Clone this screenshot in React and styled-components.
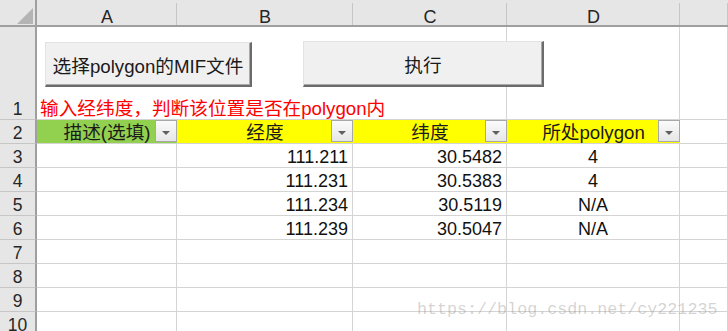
import React from 'react';
import styled, { createGlobalStyle } from 'styled-components';

const FONT = `"Liberation Sans", "Noto Sans CJK SC", sans-serif`;

const GlobalStyle = createGlobalStyle`
  html, body { margin: 0; padding: 0; background: #fff; }
  body { font-family: ${FONT}; }
  * { box-sizing: border-box; }
`;

const Sheet = styled.div`
  position: relative;
  width: 728px;
  height: 331px;
  overflow: hidden;
  background: #fff;
`;

const Grid = styled.div`
  display: grid;
  grid-template-columns: 37px 140px 176px 154px 173px 1fr;
  grid-template-rows: 27px 93px repeat(9, 24px);
`;

const Corner = styled.div`
  background: #e6e6e6;
  border-right: 2px solid #9f9f9f;
  border-bottom: 2px solid #9f9f9f;
  display: flex;
  align-items: flex-end;
  justify-content: flex-end;
  padding: 0 2px 1px 0;
`;

const ColHeader = styled.div`
  position: relative;
  background: #e6e6e6;
  border-bottom: 2px solid #9f9f9f;
  display: flex;
  align-items: flex-start;
  justify-content: center;
  padding-top: 8px;
  font-size: 18px;
  line-height: 18px;
  color: #262626;
  &::after {
    content: '';
    position: absolute;
    right: 0;
    top: 3px;
    bottom: 0;
    width: 1px;
    background: #c6c6c6;
  }
`;

const RowHeader = styled.div`
  background: #e6e6e6;
  border-right: 2px solid #9f9f9f;
  border-bottom: 1px solid #c6c6c6;
  display: flex;
  align-items: flex-end;
  justify-content: center;
  font-size: 17.5px;
  line-height: 20px;
  color: #262626;
`;

const justify = (a) =>
  a === 'right' ? 'flex-end' : a === 'center' ? 'center' : 'flex-start';

const Cell = styled.div`
  border-right: 1px solid #d4d4d4;
  border-bottom: 1px solid #d4d4d4;
  display: flex;
  align-items: flex-end;
  justify-content: ${(p) => justify(p.$align)};
  padding: 0 ${(p) => (p.$align === 'center' ? '3px' : '4px')} 0 3px;
  font-size: 18px;
  line-height: 20px;
  color: #111;
  white-space: nowrap;
  min-width: 0;
`;

const IntroCell = styled.div`
  grid-column: span 3;
  border-right: 1px solid #d4d4d4;
  border-bottom: 1px solid #d4d4d4;
  display: flex;
  flex-direction: column;
  justify-content: space-between;
  padding: 14px 0 0 3px;
  min-width: 0;
`;

const Toolbar = styled.div`
  display: flex;
  align-items: flex-end;
  gap: 51px;
  margin-left: 5px;
`;

const SheetButton = styled.button`
  flex: 0 0 auto;
  width: ${(p) => p.$w}px;
  height: ${(p) => p.$h}px;
  background: #f0f0f0;
  border-top: 1px solid #e3e3e3;
  border-left: 1px solid #e3e3e3;
  border-right: 2px solid #6b6b6b;
  border-bottom: 2px solid #6b6b6b;
  box-shadow: inset -1px -1px 0 #a9a9a9;
  font-family: ${FONT};
  font-size: 18.67px;
  color: #1a1a1a;
  padding: 0;
  white-space: nowrap;
`;

const Notice = styled.div`
  font-size: 18.67px;
  line-height: 20px;
  color: #ff0000;
  white-space: nowrap;
`;

const HeaderCell = styled.div`
  position: relative;
  background: ${(p) => p.$fill};
  border-bottom: 1px solid #d4d4d4;
  display: flex;
  align-items: flex-end;
  justify-content: center;
  font-size: 18.67px;
  line-height: 20px;
  color: #1a1a1a;
  white-space: nowrap;
`;

const FilterButton = styled.div`
  position: absolute;
  right: 0;
  top: 0;
  width: 22px;
  height: 22px;
  border: 1px solid #a8a8a8;
  background: linear-gradient(#fbfbfb, #e6e6e6);
  display: flex;
  align-items: center;
  justify-content: center;
  padding-top: 3px;
`;

const Arrow = styled.span`
  width: 0;
  height: 0;
  border-left: 4px solid transparent;
  border-right: 4px solid transparent;
  border-top: 4px solid #5f5f5f;
`;

const Watermark = styled.div`
  position: absolute;
  left: 417px;
  top: 302px;
  font-family: "Liberation Mono", "DejaVu Sans Mono", monospace;
  font-size: 16.7px;
  line-height: 16.7px;
  color: rgba(140, 140, 140, 0.38);
  white-space: nowrap;
  pointer-events: none;
`;

const CornerTriangle = () => (
  <svg width="16" height="16" viewBox="0 0 16 16">
    <polygon points="16,0 16,16 0,16" fill="#b4b4b4" />
  </svg>
);

const columns = ['A', 'B', 'C', 'D', ''];

const headers = [
  { text: '描述(选填)', fill: '#92d050' },
  { text: '经度', fill: '#ffff00' },
  { text: '纬度', fill: '#ffff00' },
  { text: '所处polygon', fill: '#ffff00' },
];

const data = [
  ['', '111.211', '30.5482', '4'],
  ['', '111.231', '30.5383', '4'],
  ['', '111.234', '30.5119', 'N/A'],
  ['', '111.239', '30.5047', 'N/A'],
];

const aligns = ['left', 'right', 'right', 'center', 'left'];

export default function App() {
  const emptyRows = [7, 8, 9, 10];
  return (
    <Sheet>
      <GlobalStyle />
      <Grid>
        <Corner>
          <CornerTriangle />
        </Corner>
        {columns.map((c, i) => (
          <ColHeader key={'h' + i}>{c}</ColHeader>
        ))}

        <RowHeader>1</RowHeader>
        <IntroCell>
          <Toolbar>
            <SheetButton $w={207} $h={45}>选择polygon的MIF文件</SheetButton>
            <SheetButton $w={241} $h={46}>执行</SheetButton>
          </Toolbar>
          <Notice>输入经纬度，判断该位置是否在polygon内</Notice>
        </IntroCell>
        <Cell />
        <Cell />

        <RowHeader>2</RowHeader>
        {headers.map((h, i) => (
          <HeaderCell key={'hc' + i} $fill={h.fill}>
            {h.text}
            <FilterButton>
              <Arrow />
            </FilterButton>
          </HeaderCell>
        ))}
        <Cell />

        {data.map((row, r) => (
          <React.Fragment key={'r' + r}>
            <RowHeader>{r + 3}</RowHeader>
            {row.map((v, c) => (
              <Cell key={c} $align={aligns[c]}>
                {v}
              </Cell>
            ))}
            <Cell />
          </React.Fragment>
        ))}

        {emptyRows.map((n) => (
          <React.Fragment key={'e' + n}>
            <RowHeader>{n}</RowHeader>
            <Cell />
            <Cell />
            <Cell />
            <Cell />
            <Cell />
          </React.Fragment>
        ))}
      </Grid>
      <Watermark>https://blog.csdn.net/cy221235</Watermark>
    </Sheet>
  );
}
